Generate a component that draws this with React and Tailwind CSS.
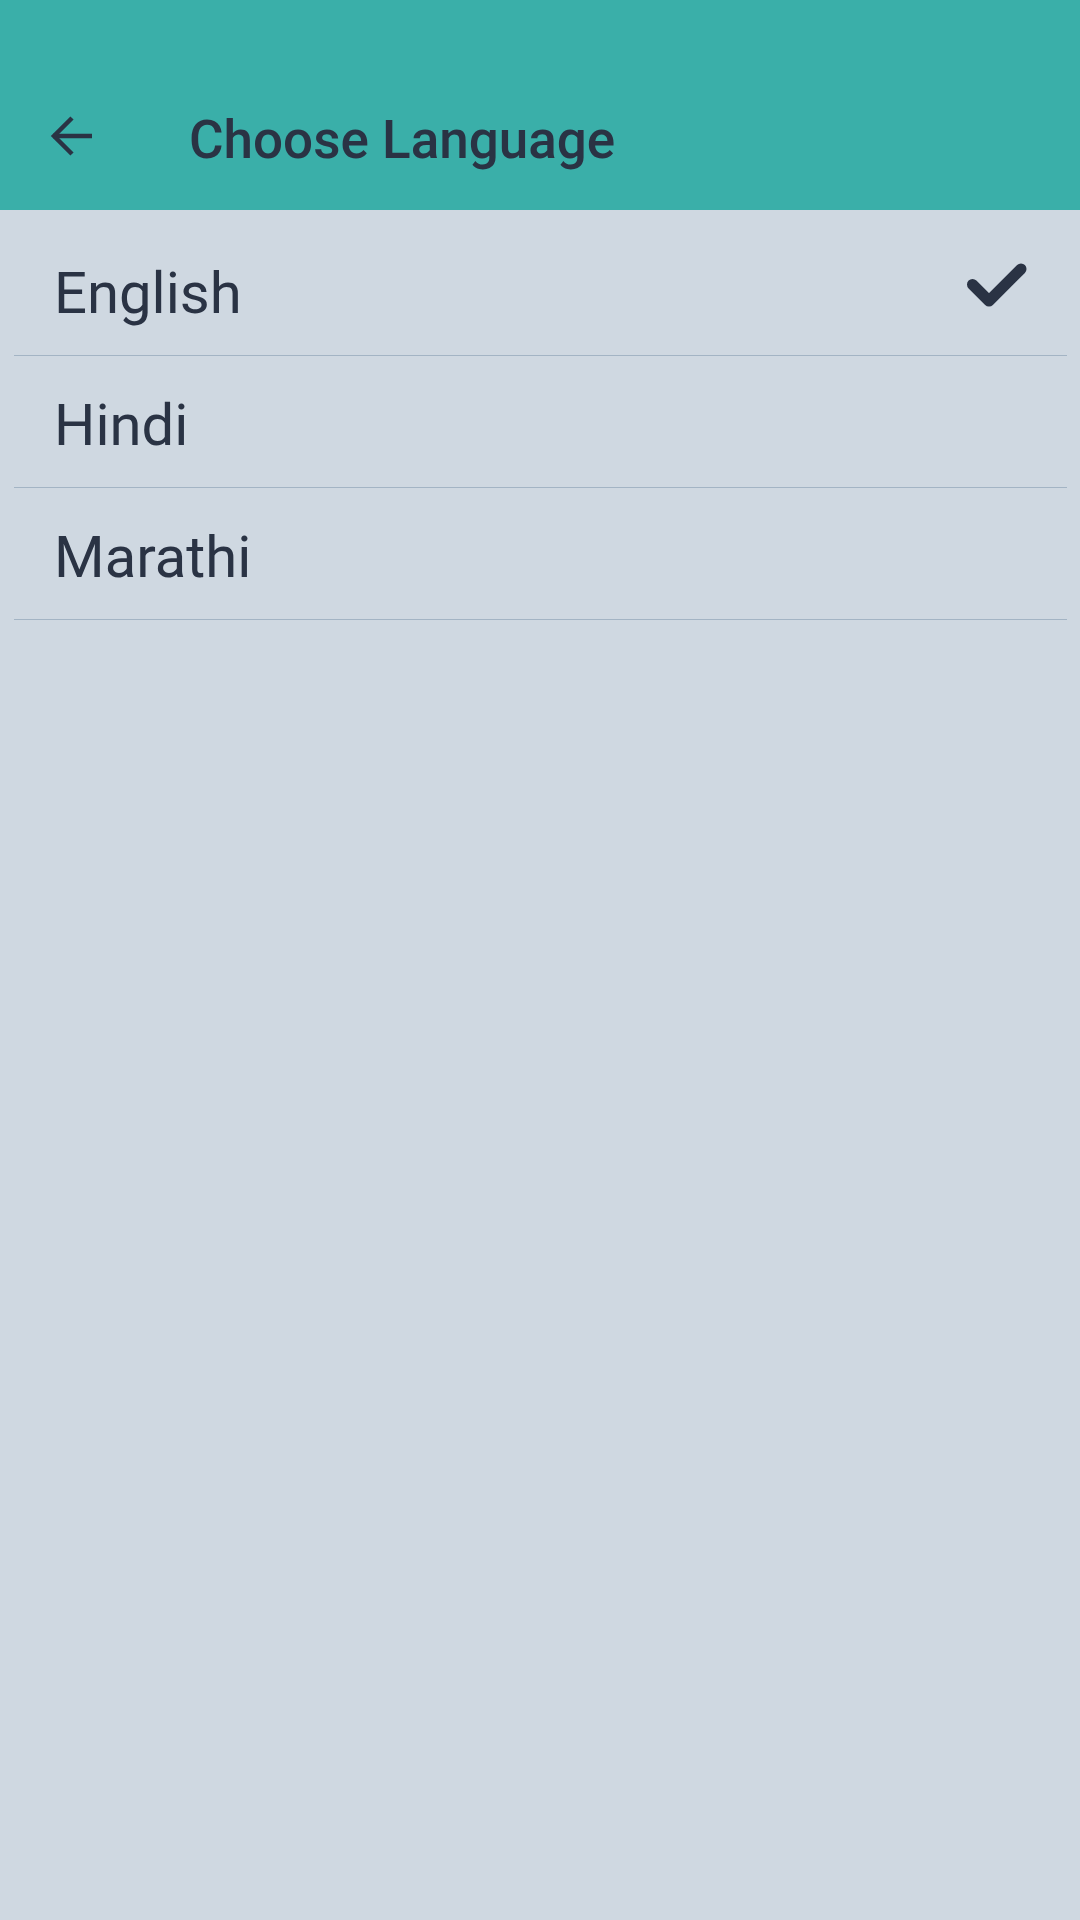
import React from 'react'

const languages = [
  { name: 'English', selected: true },
  { name: 'Hindi' },
  { name: 'Marathi' }
]

export default function App() {
  return (
    <div
      className="min-h-screen bg-[#cfd8e1] text-[#2a3344]"
      style={{ fontFamily: 'Roboto, "Noto Sans", sans-serif' }}
    >
      {/* Toolbar */}
      <header className="h-[210px] bg-[#3aafa9] pt-[70px]">
        <div className="h-[140px] flex items-center">
          <svg
            className="ml-[49px] mb-[8px] shrink-0"
            width="44"
            height="44"
            viewBox="0 0 44 44"
            fill="none"
            stroke="#2a3344"
            strokeWidth="4.5"
          >
            <path d="M43 22H4" />
            <path d="M23 4L5 22L23 40" />
          </svg>
          <h1 className="ml-[96px] text-[53px] font-medium leading-none">
            Choose Language
          </h1>
        </div>
      </header>

      {/* Language list */}
      <ul className="mx-[14px] mr-[13px] pt-[14px]">
        {languages.map((lang) => (
          <li
            key={lang.name}
            className="h-[132px] border-b border-[#a3b4c4] flex items-center justify-between pl-[40px] pr-[35px] pt-[6px]"
          >
            <span className="text-[58px] leading-none">{lang.name}</span>
            {lang.selected && (
              <svg
                className="mb-[20px] shrink-0"
                width="72"
                height="60"
                viewBox="0 0 72 60"
                fill="none"
                stroke="#2a3344"
                strokeWidth="11"
                strokeLinecap="round"
                strokeLinejoin="round"
              >
                <polyline points="12.5,31.5 29,48 61,16" />
              </svg>
            )}
          </li>
        ))}
      </ul>
    </div>
  )
}
